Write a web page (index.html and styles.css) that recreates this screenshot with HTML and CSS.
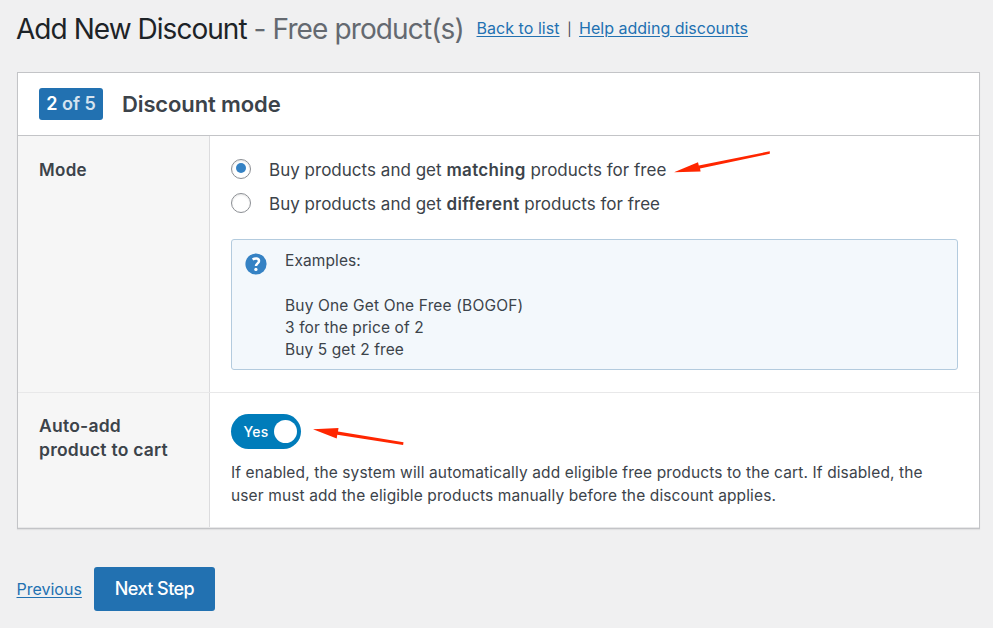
FILE: index.html
```
<!DOCTYPE html>
<html lang="en">
<head>
<meta charset="utf-8">
<title>Add New Discount</title>
<link rel="stylesheet" href="styles.css">
</head>
<body>
<header class="page-head">
  <h1 class="title"><span class="title-main">Add New Discount</span> <span class="title-sub">- Free product(s)</span></h1>
  <nav class="links"><a class="back" href="#">Back to list</a><span class="sep">|</span><a class="help" href="#">Help adding discounts</a></nav>
</header>
<main class="card">
  <div class="card-head">
    <span class="step"><b>2</b> of 5</span>
    <h2 class="card-title">Discount mode</h2>
  </div>
  <section class="row row-mode">
    <div class="label"><span class="label-mode">Mode</span></div>
    <div class="field">
      <label class="option"><span class="radio checked"></span><span class="opt-a">Buy products and get <b>matching</b> products for free</span>
        <svg class="arrow arrow-a" width="100" height="26" viewBox="0 0 100 26"><path d="M4 22.3 28 12.2l.8 3.4L99.800 1.200v2.600L30 18.600l.6 3z" fill="#ff2600"/></svg>
      </label>
      <label class="option"><span class="radio"></span><span class="opt-b">Buy products and get <b>different</b> products for free</span></label>
      <div class="notice">
        <svg class="help-icon" width="22" height="22" viewBox="0 0 22 22"><circle cx="11" cy="11" r="10.600" fill="#3582c4"/><path d="M7.600 6.600C10.300 4.700 14 5.200 14 7.900c0 2.500-3 2.400-3 5.100" fill="none" stroke="#fff" stroke-width="2.500"/><circle cx="10.900" cy="16.400" r="1.650" fill="#fff"/></svg>
        <div class="notice-text"><p class="ex">Examples:</p><p class="e1">Buy One Get One Free (BOGOF)</p><p class="e2">3 for the price of 2</p><p class="e2">Buy 5 get 2 free</p></div>
      </div>
    </div>
  </section>
  <section class="row row-auto">
    <div class="label"><span class="label-auto">Auto-add<br>product to cart</span></div>
    <div class="field">
      <div class="toggle-line">
        <span class="toggle"><span class="yes">Yes</span><span class="knob"></span></span>
        <svg class="arrow arrow-b" width="94" height="22" viewBox="0 0 94 22"><path d="M1 4.300 26.500 3l-.5 3.600L91.500 17.200l-.4 2.900L25.300 9.700l-.6 3.700z" fill="#ff2600"/></svg>
      </div>
      <p class="desc">If enabled, the system will automatically add eligible free products to the cart. If disabled, the<br>user must add the eligible products manually before the discount applies.</p>
    </div>
  </section>
</main>
<footer class="actions"><a class="prev" href="#">Previous</a><button class="next" type="button">Next Step</button></footer>
</body>
</html>
```
FILE: styles.css
```
* { box-sizing: border-box; }
body { margin: 0; padding: 0 13px 0 17px; height: 628px; overflow: hidden; background: #f0f0f1; color: #3c434a; font-family: Inter, sans-serif; font-size: 16px; }
h1, h2, p { margin: 0; }
a { color: #2271b1; text-underline-offset: 2px; }
.page-head { display: flex; align-items: flex-start; height: 72px; white-space: nowrap; }
.title { width: 461px; margin-left: -1px; font-size: 28px; font-weight: 400; line-height: 36px; padding-top: 11px; letter-spacing: -0.96px; color: #1d2327; }
.title-sub { color: #646970; letter-spacing: -0.88px; }
.links { display: flex; line-height: 24px; padding-top: 16px; margin-left: -0.5px; }
.back { letter-spacing: 0.05px; }
.sep { width: 19.5px; padding-top: 1px; text-align: center; font-size: 13px; }
.card { height: 457px; background: #fff; border: 1px solid #c3c4c7; box-shadow: 0 1px 1px rgba(0,0,0,.06); }
.card-head { height: 63px; display: flex; align-items: center; gap: 19px; padding-left: 21px; border-bottom: 1px solid #c3c4c7; }
.step { width: 64px; height: 32px; border-radius: 3px; background: #2271b1; color: #d5e3ef; font-size: 18px; font-weight: 600; line-height: 32px; text-align: center; white-space: nowrap; }
.step b { color: #fff; font-weight: 600; }
.card-title { font-size: 22px; font-weight: 600; line-height: 32px; letter-spacing: -0.12px; }
.row { display: grid; grid-template-columns: 192px 1fr; border-bottom: 1px solid #e8e8e9; }
.row-mode { height: 257px; }
.row-auto { height: 135px; }
.label { background: #f6f6f6; border-right: 1px solid #dcdcde; padding: 22px 0 0 21px; font-size: 17px; font-weight: 600; line-height: 24px; letter-spacing: 0.3px; }
.row-auto .label { padding-top: 21px; font-size: 17.5px; letter-spacing: 0.23px; }
.field { padding: 21px 21px 0; min-width: 0; }
.option { display: flex; align-items: center; height: 26px; margin-bottom: 8px; font-size: 17px; letter-spacing: 0.02px; white-space: nowrap; }
.option b { font-weight: 600; letter-spacing: 0.33px; }
.radio { width: 20px; height: 20px; margin: 0 18px 2px 0; border: 1px solid #8c8f94; border-radius: 50%; background: #fff; box-shadow: inset 0 1px 2px rgba(0,0,0,.1); display: flex; align-items: center; justify-content: center; }
.checked::before { content: ""; width: 10px; height: 10px; margin-bottom: 2px; border-radius: 50%; background: #3582c4; }
.arrow { flex: none; }
.arrow-a { margin: -15px 0 0 4px; }
.notice { display: flex; gap: 18px; height: 131px; margin-top: 22px; padding: 10px 13px; border: 1px solid #b3cbde; border-radius: 3px; background: #f3f8fc; font-size: 15.5px; line-height: 22px; }
.help-icon { flex: none; margin-top: 3px; }
.ex { margin-bottom: 23px; letter-spacing: 0.1px; }
.e1 { letter-spacing: 0.16px; }
.e2 { letter-spacing: 0.1px; }
.toggle-line { display: flex; }
.toggle { display: flex; align-items: center; width: 70px; height: 35px; padding-left: 12.5px; border-radius: 18px; background: #007cba; color: #fff; font-size: 14px; font-weight: 500; letter-spacing: 0.3px; }
.yes { width: 30px; }
.knob { width: 23px; height: 23px; border-radius: 50%; background: #fff; }
.arrow-b { margin: 11px 0 0 11px; }
.desc { margin-top: 12px; font-size: 15.5px; line-height: 23px; letter-spacing: 0.12px; white-space: nowrap; }
.actions { display: flex; align-items: center; gap: 12px; height: 44px; margin-top: 38px; }
.prev { width: 65.500px; margin-left: -0.5px; white-space: nowrap; }
.next { width: 121px; height: 44px; border: 0; border-radius: 3px; padding: 0; background: #2271b1; color: #fff; font: 500 18px/44px Inter, sans-serif; letter-spacing: -0.55px; white-space: nowrap; }
```
